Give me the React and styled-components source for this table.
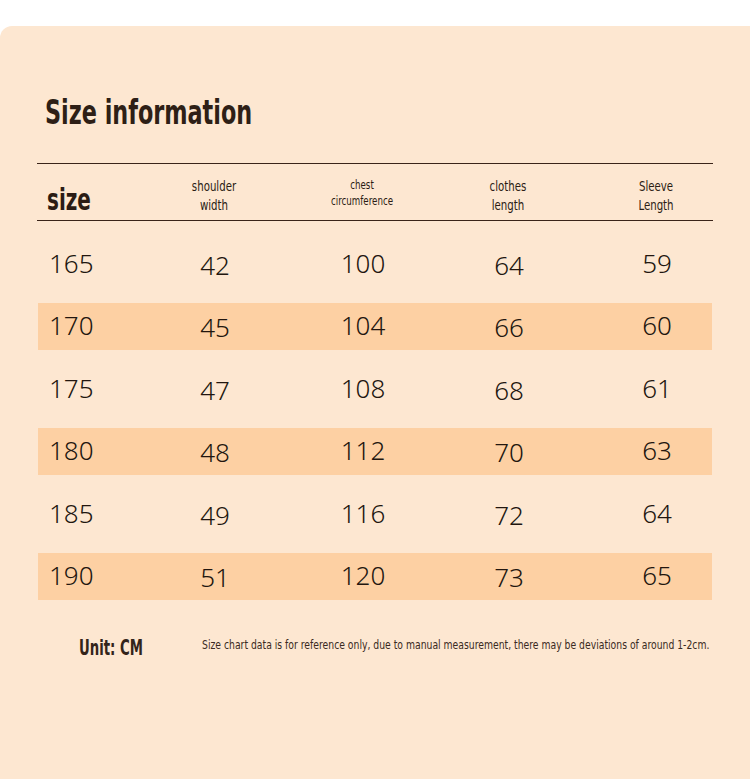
import React from 'react'
import styled, { createGlobalStyle } from 'styled-components'

const Global = createGlobalStyle`
  html, body { margin: 0; padding: 0; background: #fff; }
  body { width: 750px; height: 779px; overflow: hidden; }
`

// the reference uses a very narrow display face; we squeeze a condensed face to its width
const cond = `"DejaVu Sans Condensed", "DejaVu Sans", "Liberation Sans Narrow", sans-serif`
const ink = '#2b1c14'
const cols = '103px 148px 148px 144px 152px'

const Card = styled.div`
  margin-top: 26px;
  height: 753px;
  background: #fde7d1;
  border-top-left-radius: 12px;
  padding: 0 37px;
  box-sizing: border-box;
  color: ${ink};
  font-stretch: condensed;
`

const Title = styled.h1`
  margin: 0;
  padding: 66px 0 0 8px;
  height: 137px;
  box-sizing: border-box;
  font-family: ${cond};
  font-weight: 700;
  font-size: 34px;
  line-height: 40px;
  white-space: nowrap;
  color: #2e1f16;
  transform: scaleX(0.73);
  transform-origin: 8px 0;
`

const Head = styled.div`
  display: grid;
  grid-template-columns: ${cols};
  align-items: center;
  height: 58px;
  border-top: 1px solid #3a2419;
  border-bottom: 1px solid #3a2419;
  box-sizing: border-box;
`

const SizeHead = styled.div`
  padding-left: 10px;
  font-family: ${cond};
  font-weight: 700;
  font-size: 30px;
  padding-top: 14px;
  transform: scaleX(0.74);
  transform-origin: 10px 0;
`

const ColHead = styled.div`
  text-align: center;
  font-family: ${cond};
  font-weight: 500;
  font-size: ${p => (p.$small ? '11.5px' : '13.5px')};
  line-height: ${p => (p.$small ? '16px' : '19px')};
  margin-top: ${p => (p.$small ? '2px' : '8px')};
  transform: scaleX(0.84);
`

const Rows = styled.div`
  display: flex;
  flex-direction: column;
  gap: 15.5px;
  padding-top: 19px;
  width: 674px;
  margin-left: 1px;
`

const Row = styled.div`
  display: grid;
  grid-template-columns: ${cols};
  align-items: center;
  height: 47px;
  background: ${p => (p.$striped ? '#fdd0a3' : 'transparent')};
  font-family: "Noto Sans", "Open Sans", sans-serif;
  font-weight: 360;
  font-stretch: normal;
  font-size: 26px;
  line-height: 30px;
  color: #22160f;
`

const SizeCell = styled.div`
  padding-left: 11px;
  margin-top: -2px;
`

const Cell = styled.div`
  text-align: center;
  margin-top: ${p => (p.$low ? '2px' : '-2px')};
`

const Footer = styled.div`
  display: flex;
  align-items: center;
  padding-top: 30px;
`

const Unit = styled.div`
  flex-shrink: 0;
  width: 165px;
  padding-left: 42px;
  box-sizing: border-box;
  font-family: ${cond};
  font-weight: 700;
  font-size: 22px;
  margin-top: 5px;
  white-space: nowrap;
  color: #33241a;
  transform: scaleX(0.67);
  transform-origin: 42px 0;
`

const Note = styled.div`
  font-family: ${cond};
  font-weight: 500;
  font-size: 11.5px;
  white-space: nowrap;
  color: #3a2a22;
  transform: scaleX(0.895);
  transform-origin: 0 0;
`

const data = [
  [165, 42, 100, 64, 59],
  [170, 45, 104, 66, 60],
  [175, 47, 108, 68, 61],
  [180, 48, 112, 70, 63],
  [185, 49, 116, 72, 64],
  [190, 51, 120, 73, 65],
]

export default function App() {
  return (
    <>
      <Global />
      <Card>
        <Title>Size information</Title>
        <Head>
          <SizeHead>size</SizeHead>
          <ColHead>shoulder<br />width</ColHead>
          <ColHead $small>chest<br />circumference</ColHead>
          <ColHead>clothes<br />length</ColHead>
          <ColHead>Sleeve<br />Length</ColHead>
        </Head>
        <Rows>
          {data.map((r, i) => (
            <Row key={r[0]} $striped={i % 2 === 1}>
              <SizeCell>{r[0]}</SizeCell>
              <Cell $low>{r[1]}</Cell>
              <Cell>{r[2]}</Cell>
              <Cell $low>{r[3]}</Cell>
              <Cell>{r[4]}</Cell>
            </Row>
          ))}
        </Rows>
        <Footer>
          <Unit>Unit: CM</Unit>
          <Note>Size chart data is for reference only, due to manual measurement, there may be deviations of around 1-2cm.</Note>
        </Footer>
      </Card>
    </>
  )
}
